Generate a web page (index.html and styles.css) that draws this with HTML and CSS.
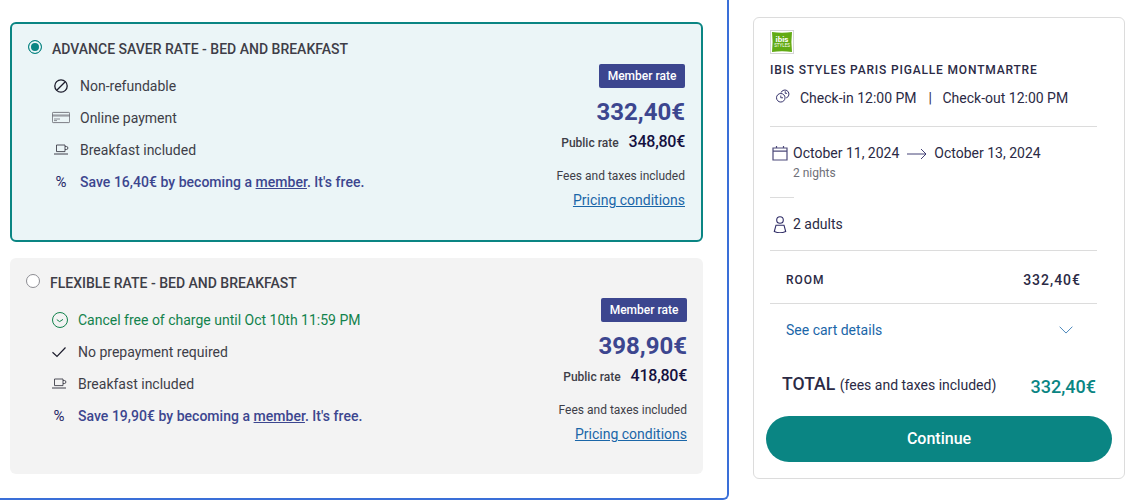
FILE: index.html
```html
<!DOCTYPE html>
<html lang="en">
<head>
<meta charset="utf-8">
<title>Rates</title>
<link rel="stylesheet" href="styles.css">
</head>
<body>
<div class="page">
  <section class="offers">
    <article class="offer selected">
      <div class="offer-main">
        <h2 class="offer-title"><span class="radio on"></span>ADVANCE SAVER RATE - BED AND BREAKFAST</h2>
        <ul class="features">
          <li><svg class="ic" viewBox="0 0 18 18"><circle cx="9" cy="9" r="6.2" fill="none" stroke="#1b1b2b" stroke-width="1.3"/><path d="M5 13 13 5" stroke="#1b1b2b" stroke-width="1.3"/></svg>Non-refundable</li>
          <li><svg class="ic" viewBox="0 0 18 18"><rect x="0.4" y="3.4" width="17.2" height="10.2" rx="0.8" fill="none" stroke="#5f6067" stroke-width="0.8"/><path d="M.5 6h17M.5 7h17M2 10h6M2 11.6h3" stroke="#5f6067" stroke-width="0.7"/></svg>Online payment</li>
          <li><svg class="ic" viewBox="0 0 18 18"><path d="M4.5 4h8.5v6.6H4.5zM13 5.5h1.4a1.3 1.3 0 0 1 0 3H13" fill="none" stroke="#3f3f4a" stroke-width="0.9"/><path d="M2 13h14" stroke="#3f3f4a" stroke-width="1"/></svg>Breakfast included</li>
          <li class="save"><span class="pct">%</span><span>Save 16,40€ by becoming a <a href="#">member</a>. It's free.</span></li>
        </ul>
      </div>
      <div class="offer-price">
        <span class="badge">Member rate</span>
        <span class="price">332,40€</span>
        <span class="public"><span class="public-label">Public rate</span><b>348,80€</b></span>
        <span class="fees">Fees and taxes included</span>
        <a class="cond" href="#">Pricing conditions</a>
      </div>
    </article>
    <article class="offer">
      <div class="offer-main">
        <h2 class="offer-title"><span class="radio"></span>FLEXIBLE RATE - BED AND BREAKFAST</h2>
        <ul class="features">
          <li class="green"><svg class="ic big" viewBox="0 0 16 16"><circle cx="8" cy="8" r="7.5" fill="none" stroke="#12824c" stroke-width="1"/><path d="M4.8 7.6 7.6 9.6 11 7.4" fill="none" stroke="#12824c" stroke-width="1"/></svg>Cancel free of charge until Oct 10th 11:59 PM</li>
          <li><svg class="ic" viewBox="0 0 18 18"><path d="M2.5 9.2 7 13.5 15.5 4.5" fill="none" stroke="#1b1b2b" stroke-width="1.2"/></svg>No prepayment required</li>
          <li><svg class="ic" viewBox="0 0 18 18"><path d="M4.5 4h8.5v6.6H4.5zM13 5.5h1.4a1.3 1.3 0 0 1 0 3H13" fill="none" stroke="#3f3f4a" stroke-width="0.9"/><path d="M2 13h14" stroke="#3f3f4a" stroke-width="1"/></svg>Breakfast included</li>
          <li class="save"><span class="pct">%</span><span>Save 19,90€ by becoming a <a href="#">member</a>. It's free.</span></li>
        </ul>
      </div>
      <div class="offer-price">
        <span class="badge">Member rate</span>
        <span class="price">398,90€</span>
        <span class="public"><span class="public-label">Public rate</span><b>418,80€</b></span>
        <span class="fees">Fees and taxes included</span>
        <a class="cond" href="#">Pricing conditions</a>
      </div>
    </article>
  </section>
  <aside class="summary">
    <svg class="logo" viewBox="0 0 24 24"><rect x="0.5" y="0.5" width="23" height="23" fill="#fff" stroke="#d5d5d5"/><path d="M2 2Q12 3.4 22 2Q20.8 12 22 22Q12 20.6 2 22Q3.2 12 2 2Z" fill="#62ab14"/><text class="logo-a" x="12" y="11.5" text-anchor="middle">ibis</text><text class="logo-b" x="12" y="16.5" text-anchor="middle">STYLES</text></svg>
    <h3 class="hotel">IBIS STYLES PARIS PIGALLE MONTMARTRE</h3>
    <div class="checks">
      <svg class="ic-check" viewBox="0 0 18 18"><circle cx="6.5" cy="11" r="4.8" fill="none" stroke="#2f2c66" stroke-width="1.1"/><path d="M6.5 8.5V11H9" fill="none" stroke="#2f2c66" stroke-width="1"/><path d="M6.8 5.2A4.6 4.6 0 1 1 12.6 11.2" fill="none" stroke="#2f2c66" stroke-width="1.1"/><path d="M11.5 3.6V6H13.6" fill="none" stroke="#2f2c66" stroke-width="1"/></svg>
      <span>Check-in 12:00 PM</span><span class="pipe">|</span><span>Check-out 12:00 PM</span>
    </div>
    <hr class="rule first">
    <div class="dates">
      <svg class="ic-cal" viewBox="0 0 16 16"><path d="M1 3h14v12H1zM1 6.2h14M4.5 1v2M11.5 1v2" fill="none" stroke="#4d4a7a" stroke-width="1.2"/></svg>
      <span>October 11, 2024</span>
      <svg class="ic-arrow" viewBox="0 0 20 12"><path d="M0 6h19M14 1l5 5-5 5" fill="none" stroke="#2f2c66" stroke-width="0.9"/></svg>
      <span>October 13, 2024</span>
    </div>
    <div class="nights">2 nights</div>
    <hr class="rule short">
    <div class="guests">
      <svg class="ic-user" viewBox="0 0 14 18"><circle cx="7" cy="5" r="3.3" fill="none" stroke="#2f2c66" stroke-width="1.1"/><path d="M1.3 16.5 3 10.2h8l1.7 6.3a14 14 0 0 1-11.4 0Z" fill="none" stroke="#2f2c66" stroke-width="1.1"/></svg>
      <span>2 adults</span>
    </div>
    <hr class="rule guests-rule">
    <div class="room"><span>ROOM</span><b>332,40€</b></div>
    <hr class="rule">
    <a class="cart" href="#"><span>See cart details</span><svg class="ic-chev" viewBox="0 0 16 9"><path d="M.7.7 8 8 15.3.7" fill="none" stroke="#1a66a8" stroke-width="0.9"/></svg></a>
    <div class="total"><span class="total-label"><b>TOTAL</b> (fees and taxes included)</span><span class="total-price">332,40€</span></div>
    <button class="continue" type="button">Continue</button>
  </aside>
</div>
</body>
</html>
```

FILE: styles.css
```css
* { box-sizing: border-box; }
html, body { margin: 0; padding: 0; background: #fff; }
body { font-family: Roboto, "Liberation Sans", sans-serif; color: #3e3e48; height: 503px; overflow: hidden; }
.page { display: flex; align-items: flex-start; }

.offers {
  width: 729px; height: 500px; padding: 22px 24px 0 10px;
  border-right: 2px solid #3a6fd8; border-bottom: 2px solid #3a6fd8;
  border-bottom-right-radius: 6px;
  display: flex; flex-direction: column; gap: 16px;
}
.offer {
  height: 216px; padding: 16px; background: #f3f3f3; border-radius: 6px;
  display: flex; justify-content: space-between;
}
.offer.selected {
  height: 220px; background: #ebf5f7; border: 2px solid #0a8583;
}
.offer-title {
  margin: 0; height: 18px; display: flex; align-items: center;
  font-size: 14px; font-weight: 500; line-height: 18px; color: #3e3e48;
}
.radio {
  width: 14px; height: 14px; border-radius: 50%; margin-right: 10px; margin-top: -4px;
  background: #fff; border: 1px solid #8c8c92; flex: none;
}
.radio.on { border: 1.5px solid #0a8583; background: #0a8583; box-shadow: inset 0 0 0 2px #ebf5f7; }
.features { list-style: none; margin: 12px 0 0 24px; padding: 0; }
.features li { height: 32px; display: flex; align-items: center; font-size: 14px; color: #3e3e48; }
.ic { width: 18px; height: 18px; margin-right: 10px; flex: none; }
.ic.big { width: 16px; height: 16px; margin: 0 10px 0 2px; }
.green { color: #12824c !important; }
.save { font-weight: 500; color: #3c468f !important; letter-spacing: 0.025px; }
.save a { color: inherit; }
.pct { width: 18px; margin-right: 10px; text-align: center; flex: none; color: #1f2566; font-size: 15px; font-weight: 400; }

.offer-price { display: flex; flex-direction: column; align-items: flex-end; padding-top: 24px; }
.badge {
  height: 24px; width: 86px; background: #3c468f; color: #fff; border-radius: 2px;
  font-size: 12px; font-weight: 500; line-height: 24px; text-align: center;
}
.price { margin-top: 9px; font-size: 24px; font-weight: 700; line-height: 30px; color: #3c468f; }
.public { margin-top: 3px; height: 24px; display: flex; align-items: center; gap: 10px; }
.public-label { font-size: 12px; font-weight: 500; color: #3e3e48; padding-top: 2px; }
.public b { font-size: 16px; font-weight: 500; letter-spacing: -0.25px; color: #14103f; margin-top: -2px; }
.fees { margin-top: 14px; font-size: 12px; line-height: 16px; }
.cond { margin-top: 8px; font-size: 14px; line-height: 16px; color: #1a66a8; }

.summary {
  width: 372px; height: 462px; margin: 17px 0 0 24px; padding: 12px 27px 0 16px;
  border: 1px solid #dcdcdc; border-radius: 6px; color: #2b2a45;
}
.logo { display: block; width: 24px; height: 24px; }
.logo-a { font-size: 8px; font-weight: 700; fill: #fff; }
.logo-b { font-size: 4.5px; fill: #fff; }
.hotel { margin: 8px 0 0; font-size: 12px; font-weight: 500; line-height: 16px; letter-spacing: 0.83px; color: #2b2a45; }
.checks { margin-top: 10px; height: 20px; display: flex; align-items: center; font-size: 14px; color: #2b2a45; }
.ic-check { width: 16px; height: 16px; margin: -4px 9px 0 5px; flex: none; }
.pipe { margin: 0 10.5px 0 12px; }
.rule { margin: 0; border: 0; border-top: 1px solid #dcdcdc; height: 1px; }
.rule.first { margin-top: 18px; }
.rule.short { width: 24px; margin-top: 16px; }
.rule.guests-rule { margin-top: 16px; }
.dates { margin-top: 16px; height: 20px; display: flex; align-items: center; font-size: 14px; }
.ic-cal { width: 16px; height: 16px; margin: 0 5px 0 2px; flex: none; }
.ic-arrow { width: 20px; height: 12px; margin: 1px 7px 0 8px; flex: none; }
.nights { margin: 2px 0 0 23px; font-size: 12px; line-height: 16px; color: #6f6f78; }
.guests { margin-top: 16px; height: 20px; display: flex; align-items: center; font-size: 14px; }
.ic-user { width: 14px; height: 18px; margin: -1px 6px 0 3px; flex: none; }
.room { height: 52px; padding: 6px 16px 0; display: flex; justify-content: space-between; align-items: center; font-size: 12px; font-weight: 500; letter-spacing: 1px; }
.room b { font-size: 14px; font-weight: 500; }
.cart { height: 53px; padding: 0 24px 2px 16px; display: flex; justify-content: space-between; align-items: center; font-size: 14px; color: #1a66a8; text-decoration: none; }
.ic-chev { width: 14px; height: 8px; }
.total { margin-top: 17px; height: 26px; padding: 0 1px 0 12px; display: flex; justify-content: space-between; align-items: center; }
.total-label { font-size: 14px; margin-top: -6px; }
.total-label b { font-size: 17.6px; font-weight: 500; margin-right: 1px; }
.total-price { font-size: 18px; font-weight: 500; color: #0a8583; margin-top: -2px; }
.continue {
  display: block; width: 346px; height: 46px; margin: 16px 0 0 -4px; padding: 0 0 2px; border: 0; border-radius: 23px;
  background: #0a8583; color: #fff; font: 500 16px Roboto, "Liberation Sans", sans-serif;
}
```
